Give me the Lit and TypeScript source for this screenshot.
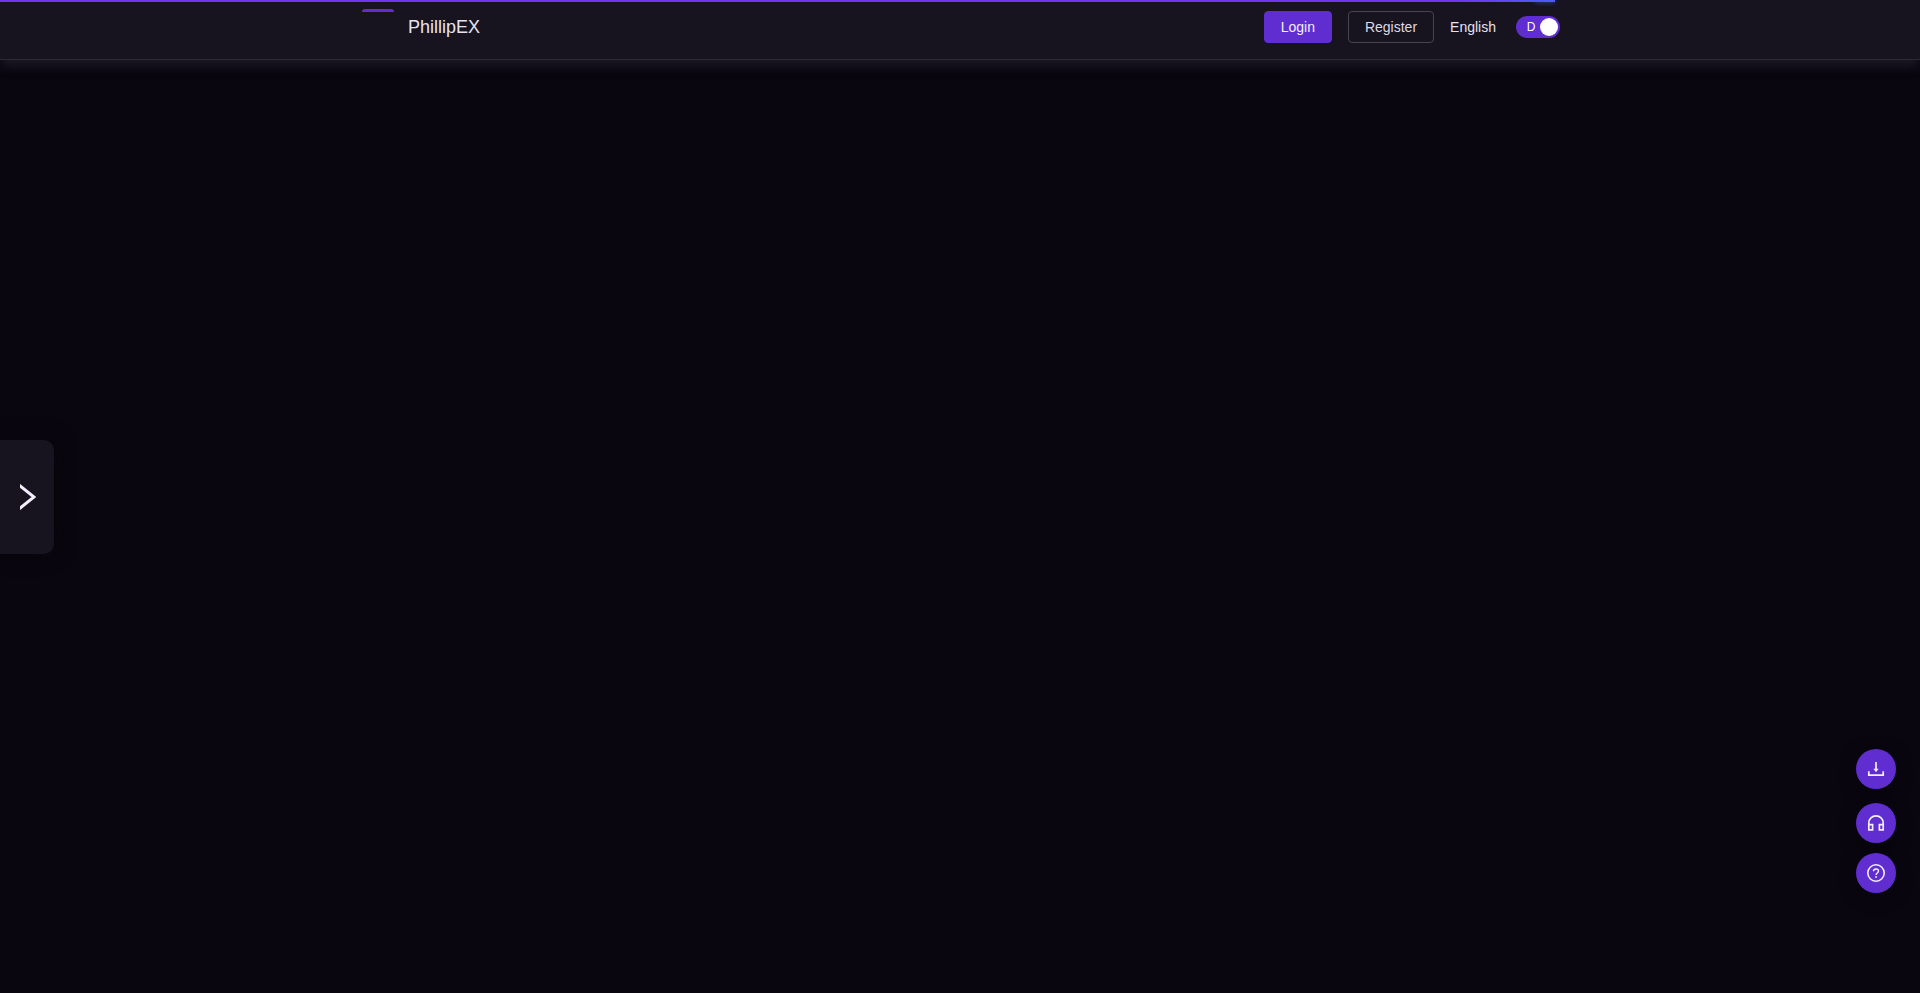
import { LitElement, html, css } from "lit";
import { customElement, property, state } from "lit/decorators.js";
import { styleMap } from "lit/directives/style-map.js";

@customElement("load-progress")
class LoadProgress extends LitElement {
  @property({ type: Number }) value = 0;

  static styles = css`
    :host { position: absolute; inset: 0 0 auto 0; z-index: 3; display: block; }
    .bar {
      height: 2px;
      background: linear-gradient(90deg, #6e35f2 calc(100% - 100px), #4d5cf8);
      display: flex;
      justify-content: flex-end;
    }
    .glow { width: 20px; height: 2px; box-shadow: 0 0 5px #3b62f0; }
  `;

  render() {
    return html`<div class="bar" style=${styleMap({ width: `${this.value}%` })}><span class="glow"></span></div>`;
  }
}

@customElement("site-header")
class SiteHeader extends LitElement {
  @state() dark = true;

  static styles = css`
    :host {
      display: block;
      background: #17131f;
      border-bottom: 1px solid #2d2935;
      box-shadow: 0 8px 10px -2px #1d1927;
    }
    .inner {
      box-sizing: border-box;
      max-width: 1200px;
      height: 59px;
      margin: 0 auto;
      padding-bottom: 5px;
      display: flex;
      align-items: center;
      justify-content: space-between;
    }
    .brand {
      display: flex;
      align-items: center;
      gap: 14px;
      padding-left: 2px;
      color: #e6e2ee;
      font-size: 18px;
      line-height: 36px;
      text-decoration: none;
    }
    .mark {
      align-self: flex-start;
      width: 32px;
      height: 3px;
      border-radius: 3px 3px 0 0;
      background: #622dce;
    }
    .actions { display: flex; align-items: center; gap: 16px; }
    .btn {
      box-sizing: border-box;
      height: 32px;
      padding: 0 16px;
      border: 1px solid #47434f;
      border-radius: 4px;
      background: transparent;
      color: #dedae4;
      font: inherit;
      cursor: pointer;
    }
    .primary { border-color: #602dd1; background: #602dd1; color: #f4efff; }
    .language { border: 0; padding: 0; margin-right: 4px; color: #e6e2ee; }
    .switch {
      box-sizing: border-box;
      width: 44px;
      height: 22px;
      padding: 2px;
      border: 0;
      border-radius: 11px;
      background: #602dd1;
      color: #fff;
      font: inherit;
      font-size: 12px;
      display: flex;
      align-items: center;
      cursor: pointer;
    }
    .mode { flex: 1; padding-left: 4px; text-align: center; }
    .knob { width: 18px; height: 18px; border-radius: 50%; background: #fff; }
    .switch[aria-checked="false"] { flex-direction: row-reverse; }
  `;

  render() {
    return html`
      <div class="inner">
        <a class="brand" href="#"><span class="mark"></span><span>PhillipEX</span></a>
        <div class="actions">
          <button class="btn primary">Login</button>
          <button class="btn">Register</button>
          <button class="btn language">English</button>
          <button class="switch" role="switch" aria-label="Dark mode"
            aria-checked=${this.dark ? "true" : "false"}
            @click=${() => (this.dark = !this.dark)}>
            <span class="mode">${this.dark ? "D" : "L"}</span><span class="knob"></span>
          </button>
        </div>
      </div>
    `;
  }
}

@customElement("app-root")
class AppRoot extends LitElement {
  static styles = css`
    :host {
      position: relative;
      display: flex;
      flex-direction: column;
      min-height: 100vh;
      background: #09060f;
      font: 14px/22px "Liberation Sans", Arial, sans-serif;
    }
    main { flex: 1; }
    .drawer {
      position: fixed;
      left: 0;
      top: calc(50% - 57px);
      width: 54px;
      height: 114px;
      padding: 0;
      border: 0;
      border-radius: 0 10px 10px 0;
      background: #17131f;
      box-shadow: 0 0 20px #08050c;
      display: flex;
      align-items: center;
      justify-content: flex-end;
      cursor: pointer;
    }
    .drawer svg { margin-right: 18px; }
    .tools {
      position: fixed;
      right: 24px;
      bottom: 100px;
      display: flex;
      flex-direction: column;
      gap: 10px;
    }
    .tool {
      width: 40px;
      height: 40px;
      padding: 0;
      border: 0;
      border-radius: 50%;
      background: #602dd1;
      box-shadow: 0 4px 16px #08050c;
      display: flex;
      align-items: center;
      justify-content: center;
      cursor: pointer;
    }
    .download { margin-bottom: 4px; }
    svg { fill: none; stroke: #f3edff; }
  `;

  render() {
    return html`
      <load-progress value="81"></load-progress>
      <site-header></site-header>
      <main></main>
      <button class="drawer" aria-label="Open panel">
        <svg width="16" height="26" viewBox="0 0 16 26" stroke-width="3"><path d="M-1 1 14 13-1 25" /></svg>
      </button>
      <div class="tools">
        <button class="tool download" aria-label="Download">
          <svg width="18" height="18" viewBox="0 0 18 18" stroke-width="1.7">
            <path d="M9 2v8M1.8 11.2v3.9h14.4v-3.9" />
            <path d="M6.4 8.8h5.2L9 12.2z" fill="#f3edff" stroke="none" />
          </svg>
        </button>
        <button class="tool" aria-label="Customer service">
          <svg width="18" height="18" viewBox="0 0 18 18" stroke-width="1.7">
            <path d="M1.8 15.8V9a7.2 7.2 0 0 1 14.4 0v6.8h-3.8v-5.1h3.8M1.8 10.7h3.8v5.1H1" />
          </svg>
        </button>
        <button class="tool" aria-label="Help">
          <svg width="18" height="18" viewBox="0 0 18 18" stroke-width="1.6">
            <circle cx="9" cy="9" r="8.2" />
            <path d="M6.5 7.2C6.5 5.8 7.6 5 9 5s2.5.9 2.5 2.1c0 1.9-2.5 1.8-2.5 3.9" stroke-width="1.4" />
            <circle cx="9" cy="13" r=".9" fill="#f3edff" stroke="none" />
          </svg>
        </button>
      </div>
    `;
  }
}
